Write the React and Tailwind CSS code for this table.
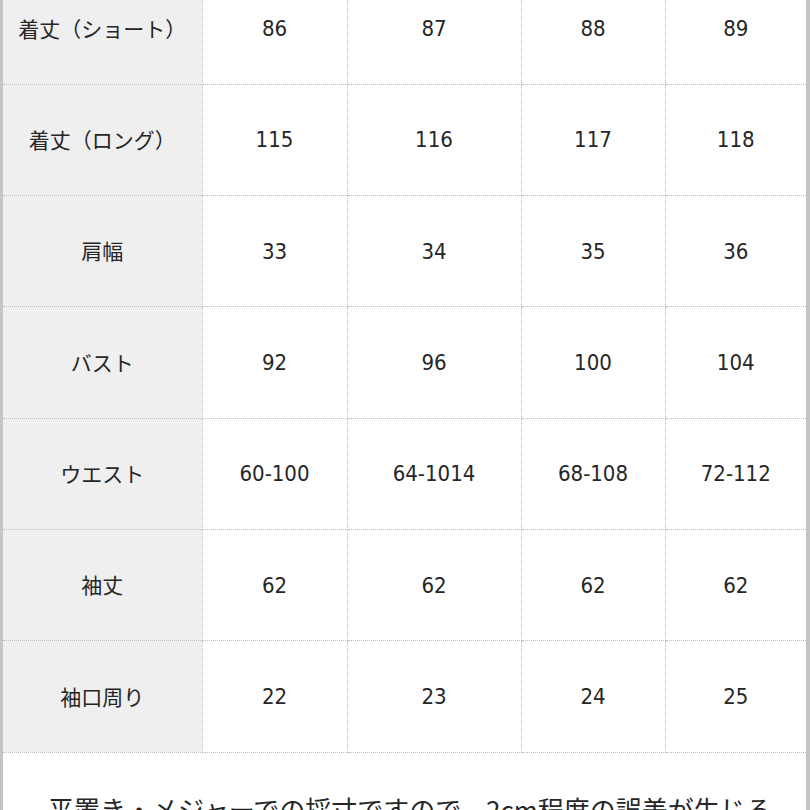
const rows = [
  ['着丈（ショート）', '86', '87', '88', '89'],
  ['着丈（ロング）', '115', '116', '117', '118'],
  ['肩幅', '33', '34', '35', '36'],
  ['バスト', '92', '96', '100', '104'],
  ['ウエスト', '60-100', '64-1014', '68-108', '72-112'],
  ['袖丈', '62', '62', '62', '62'],
  ['袖口周り', '22', '23', '24', '25'],
]

export default function App() {
  return (
    <div className="w-[810px] h-[810px] overflow-hidden bg-white">
      <div className="flow-root h-full border-l-[3px] border-r-[4px] border-[#c4c4c4] bg-white">
        <table
          className="-mt-[27px] w-full border-collapse text-[#262626]"
          style={{ tableLayout: 'fixed' }}
        >
          <colgroup>
            <col className="w-[199px]" />
            <col className="w-[145px]" />
            <col className="w-[174px]" />
            <col className="w-[144px]" />
            <col />
          </colgroup>
          <tbody>
            {rows.map((row) => (
              <tr key={row[0]} className="h-[111.3px]">
                {row.map((cell, i) => (
                  <td
                    key={i}
                    className={
                      i === 0
                        ? 'bg-[#efefef] text-center align-middle border-b border-r border-dotted border-[#bcbcbc] text-[21px] font-["Noto_Sans_CJK_JP",sans-serif]'
                        : 'text-center align-middle border-b border-r last:border-r-0 border-dotted border-[#bcbcbc] text-[22px] font-["DejaVu_Sans_Condensed","DejaVu_Sans",sans-serif]'
                    }
                  >
                    {cell}
                  </td>
                ))}
              </tr>
            ))}
          </tbody>
        </table>
        <p className="pt-[36px] pl-[45px] text-[26px] leading-[1.5] text-[#262626] whitespace-nowrap font-['Noto_Sans_CJK_JP',sans-serif]">
          平置き・メジャーでの採寸ですので、2cm程度の誤差が生じる
        </p>
      </div>
    </div>
  )
}
